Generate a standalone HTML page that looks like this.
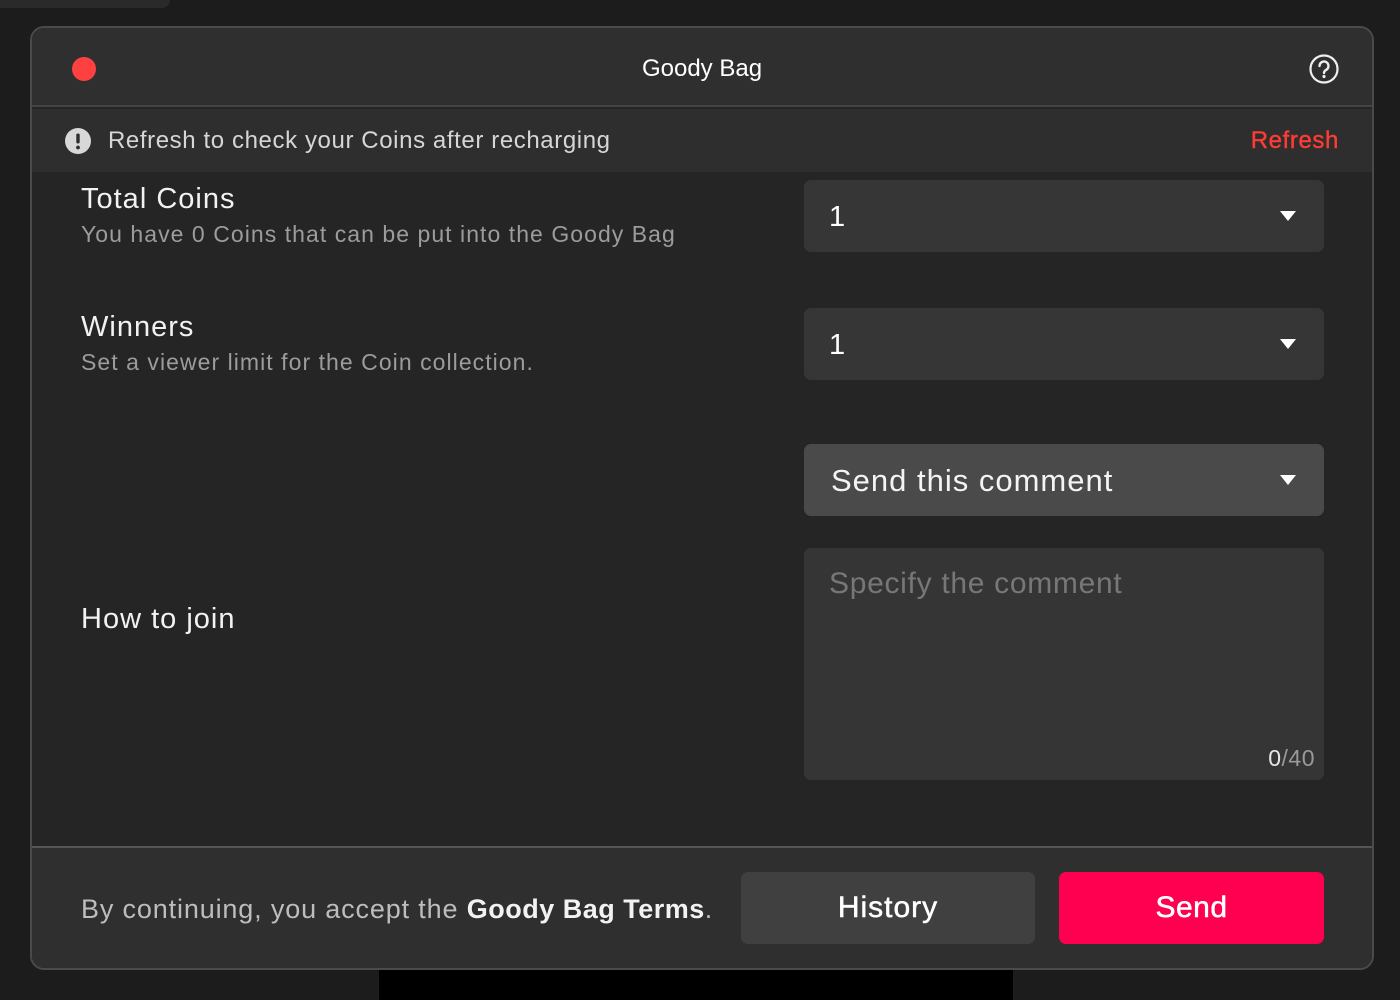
<!DOCTYPE html>
<html><head><meta charset="utf-8"><style>
*{margin:0;padding:0;box-sizing:border-box}
body{width:1400px;height:1000px;background:#1c1c1c;font-family:"Liberation Sans",sans-serif;position:relative;overflow:hidden;color:#fff}
.a{position:absolute;white-space:nowrap}
.modal{position:absolute;left:30px;top:26px;width:1344px;height:944px;border:2px solid #4a4a4a;border-radius:14px;background:#252525;overflow:hidden}
.dd{position:absolute;left:772px;width:520px;height:72px;border-radius:7px;background:#363636}
.arr{position:absolute;right:28px;top:31px;width:0;height:0;border-left:8px solid transparent;border-right:8px solid transparent;border-top:10px solid #fff}
.h{font-size:29px;color:#f2f2f2;letter-spacing:1px}
.s{font-size:23px;color:#9c9c9c;letter-spacing:1.05px}
</style></head><body>
<div class="a" style="left:0;top:0;width:170px;height:8px;background:#2a2a2a;border-radius:0 0 14px 0"></div>
<div class="a" style="left:379px;top:970px;width:634px;height:30px;background:#000"></div>
<div class="modal">
  <div class="a" style="left:0;top:0;width:100%;height:79px;background:#2f2f2f;border-bottom:2px solid #444"></div>
  <div class="a" style="left:40px;top:29px;width:24px;height:24px;border-radius:50%;background:#fe4040"></div>
  <div class="a" style="left:0;width:100%;top:27px;text-align:center;font-size:24px;letter-spacing:0px;color:#fff">Goody Bag</div>
  <svg class="a" style="left:1277px;top:26px" width="30" height="30" viewBox="0 0 30 30"><circle cx="15" cy="15" r="13.5" fill="none" stroke="#eee" stroke-width="2.2"/><path d="M10.5 12a4.5 4.5 0 1 1 6.5 4c-1.4.8-2 1.5-2 3" fill="none" stroke="#eee" stroke-width="2.4" stroke-linecap="round"/><circle cx="15" cy="22.5" r="1.6" fill="#eee"/></svg>
  <div class="a" style="left:0;top:81px;width:100%;height:63px;background:#2e2e2e"></div>
  <svg class="a" style="left:33px;top:100px" width="26" height="26" viewBox="0 0 26 26"><circle cx="13" cy="13" r="13" fill="#d8d8d8"/><rect x="11.3" y="5.5" width="3.4" height="10" rx="1.6" fill="#2e2e2e"/><circle cx="13" cy="19.5" r="1.9" fill="#2e2e2e"/></svg>
  <div class="a" style="left:76px;top:99px;font-size:24px;color:#d6d6d6;letter-spacing:0.6px">Refresh to check your Coins after recharging</div>
  <div class="a" style="right:33px;top:99px;font-size:24px;color:#fe3b35;letter-spacing:0.6px;-webkit-text-stroke:0.4px #fe3b35">Refresh</div>

  <div class="a h" style="left:49px;top:155px">Total Coins</div>
  <div class="a s" style="left:49px;top:193px">You have 0 Coins that can be put into the Goody Bag</div>
  <div class="dd" style="top:152px"><div class="a" style="left:25px;top:21px;font-size:29px">1</div><div class="arr"></div></div>

  <div class="a h" style="left:49px;top:283px">Winners</div>
  <div class="a s" style="left:49px;top:321px">Set a viewer limit for the Coin collection.</div>
  <div class="dd" style="top:280px"><div class="a" style="left:25px;top:21px;font-size:29px">1</div><div class="arr"></div></div>

  <div class="dd" style="top:416px;background:#4a4a4a"><div class="a" style="left:27px;top:19px;font-size:31px;color:#f4f4f4;letter-spacing:1px">Send this comment</div><div class="arr"></div></div>
  <div class="dd" style="top:520px;height:232px;background:#353535"><div class="a" style="left:25px;top:19px;font-size:30px;color:#777;letter-spacing:0.7px">Specify the comment</div><div class="a" style="right:9px;top:197px;font-size:23px;color:#999;letter-spacing:0.5px"><span style="color:#e6e6e6">0</span>/40</div></div>

  <div class="a h" style="left:49px;top:575px">How to join</div>

  <div class="a" style="left:0;top:818px;width:100%;height:126px;background:#2f2f2f;border-top:2px solid #555"></div>
  <div class="a" style="left:49px;top:866px;font-size:27px;color:#bdbdbd;letter-spacing:0.85px">By continuing, you accept the <b style="color:#f2f2f2;letter-spacing:0.5px">Goody Bag Terms</b>.</div>
  <div class="a" style="left:709px;top:844px;width:294px;height:72px;border-radius:7px;background:#404040;text-align:center;line-height:72px;font-size:30px;color:#fff;letter-spacing:1px;-webkit-text-stroke:0.5px #fff">History</div>
  <div class="a" style="left:1027px;top:844px;width:265px;height:72px;border-radius:7px;background:#ff0050;text-align:center;line-height:72px;font-size:30px;color:#fff;letter-spacing:0.5px;-webkit-text-stroke:0.5px #fff">Send</div>
</div>
</body></html>
